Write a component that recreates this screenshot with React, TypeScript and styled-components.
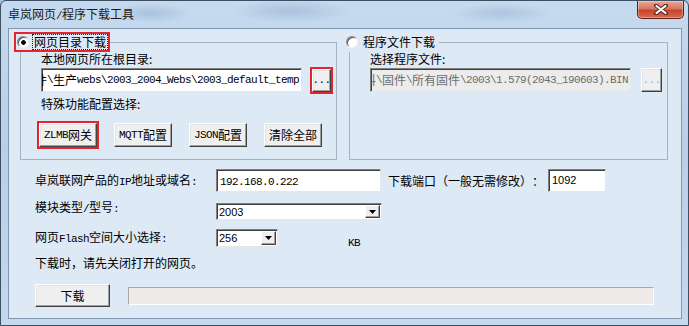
import React from "react";
import styled, { createGlobalStyle } from "styled-components";

const GlobalStyle = createGlobalStyle`
  html, body {
    margin: 0;
    padding: 0;
    background: #a9c1da;
  }
  body {
    font-family: "Noto Sans CJK SC", "DejaVu Sans", sans-serif;
    font-size: 12px;
    color: #000;
    text-spacing-trim: space-all;
  }
`;

const Window = styled.div`
  width: 689px;
  height: 326px;
  box-sizing: border-box;
  display: flex;
  flex-direction: column;
  border: 1px solid #3d4f63;
  border-radius: 6px 6px 0 0;
  overflow: hidden;
  background:
    radial-gradient(ellipse 40px 10px at 150px 12px, rgba(120, 150, 185, 0.35), transparent),
    radial-gradient(ellipse 60px 12px at 290px 10px, rgba(110, 140, 180, 0.3), transparent),
    radial-gradient(ellipse 50px 10px at 500px 12px, rgba(120, 150, 185, 0.3), transparent),
    linear-gradient(180deg, #c6daef 0%, #b8cfe7 45%, #c4d8ee 100%);
`;

const TitleBar = styled.div`
  height: 27px;
  flex: none;
  display: flex;
  align-items: flex-start;
  justify-content: space-between;
  padding-left: 7px;
`;

const Title = styled.div`
  margin-top: 6px;
  line-height: 14px;
  color: #1a1a1a;
`;

const CloseButton = styled.div`
  width: 47px;
  height: 18px;
  margin-right: 4px;
  box-sizing: border-box;
  border: 1px solid #5b2019;
  border-top: none;
  border-radius: 0 0 5px 5px;
  background: linear-gradient(180deg, #e8a796 0%, #d8775f 45%, #c7432a 55%, #d9694d 100%);
  box-shadow: inset 0 0 0 1px rgba(255, 255, 255, 0.35);
  display: flex;
  align-items: center;
  justify-content: center;
`;

const Client = styled.div`
  flex: 1;
  margin: 0 6px 6px 7px;
  border: 1px solid #8298b0;
  background: #dee9f6;
  display: flex;
  flex-direction: column;
  padding: 3px 12px 0 11px;
`;

const GroupsRow = styled.div`
  display: flex;
  gap: 12px;
`;

const Group = styled.fieldset<{ $w: number }>`
  width: ${(p) => p.$w}px;
  box-sizing: border-box;
  margin: 0;
  padding: 0;
  min-width: 0;
  border: 1px solid #a2b3c6;
`;

const Legend = styled.legend<{ $highlight?: boolean; $shift: number }>`
  padding: 1px;
  margin-left: ${(p) => p.$shift}px;
  border: 2px solid ${(p) => (p.$highlight ? "#e3252d" : "transparent")};
  display: flex;
  align-items: center;
  gap: 4px;
  height: 20px;
  box-sizing: border-box;
`;

const Radio = styled.span<{ $checked?: boolean }>`
  width: 12px;
  height: 12px;
  box-sizing: border-box;
  border-radius: 50%;
  border: 1px solid;
  border-color: #8a8a8a #f4f4f4 #f4f4f4 #8a8a8a;
  box-shadow: inset 1px 1px 0 #505050;
  background: ${(p) =>
    p.$checked
      ? "radial-gradient(circle at 55% 55%, #000 0 2px, #fff 2.6px)"
      : "#fff"};
`;

const FocusText = styled.span<{ $focus?: boolean }>`
  line-height: 14px;
  padding: 0 1px;
  outline: ${(p) => (p.$focus ? "1px dotted #222" : "none")};
`;

const GroupBody = styled.div`
  display: flex;
  flex-direction: column;
  align-items: flex-start;
  padding: 0 12px 12px 20px;
`;

const Label = styled.div<{ $top?: number }>`
  line-height: 14px;
  margin-top: ${(p) => p.$top ?? 0}px;
  white-space: nowrap;
`;

const PortLabel = styled(Label)`
  width: 156px;
  flex: none;
  margin: 0 4px 0 7px;
`;

const PathRow = styled.div`
  display: flex;
  align-items: center;
  gap: 10px;
  margin-top: 2px;
`;

const PathField = styled.div<{ $disabled?: boolean }>`
  width: 261px;
  height: 24px;
  box-sizing: border-box;
  border: 1px solid;
  border-color: #7f7f7f #e6e6e6 #e6e6e6 #7f7f7f;
  box-shadow: inset 1px 1px 0 #3f3f3f;
  background: ${(p) => (p.$disabled ? "#ececec" : "#fff")};
  color: ${(p) => (p.$disabled ? "#6d6d6d" : "#000")};
  display: flex;
  align-items: center;
  justify-content: flex-end;
  overflow: hidden;
  white-space: nowrap;
  padding: 0 2px 0 3px;
  line-height: 14px;
`;

const Button = styled.button<{ $w: number; $h: number; $highlight?: boolean; $disabled?: boolean }>`
  width: ${(p) => p.$w}px;
  height: ${(p) => p.$h}px;
  flex: none;
  padding: 0;
  box-sizing: border-box;
  background: #efefef;
  border: 1px solid;
  border-color: #ffffff #404040 #404040 #ffffff;
  box-shadow: inset -1px -1px 0 #a0a0a0, inset 1px 1px 0 #e4e4e4;
  font: inherit;
  line-height: 14px;
  color: ${(p) => (p.$disabled ? "#a8a8a8" : "#000")};
  outline: ${(p) => (p.$highlight ? "2px solid #e3252d" : "none")};
  display: flex;
  align-items: center;
  justify-content: center;
  white-space: nowrap;
`;

const ButtonRow = styled.div`
  display: flex;
  gap: 17px;
  margin: 12px 0 0 -2px;
`;

const Form = styled.div`
  display: flex;
  flex-direction: column;
  padding-left: 15px;
  margin-top: 9px;
`;

const Row = styled.div<{ $top: number; $align?: string }>`
  display: flex;
  align-items: ${(p) => p.$align ?? "center"};
  margin-top: ${(p) => p.$top}px;
`;

const RowLabel = styled.div`
  width: 181px;
  flex: none;
  line-height: 14px;
  white-space: nowrap;
`;

const TextBox = styled.div<{ $w: number; $sans?: boolean }>`
  width: ${(p) => p.$w}px;
  height: 23px;
  box-sizing: border-box;
  border: 1px solid;
  border-color: #7f7f7f #e6e6e6 #e6e6e6 #7f7f7f;
  box-shadow: inset 1px 1px 0 #3f3f3f;
  background: #fff;
  padding: 3px 0 0 3px;
  line-height: 14px;
  font-family: ${(p) => (p.$sans ? '"Liberation Sans", Arial, sans-serif' : "inherit")};
  font-size: ${(p) => (p.$sans ? "11px" : "12px")};
`;

const Combo = styled.div<{ $w: number; $h: number; $mt?: number }>`
  width: ${(p) => p.$w}px;
  height: ${(p) => p.$h}px;
  margin-top: ${(p) => p.$mt ?? 0}px;
  box-sizing: border-box;
  border: 1px solid;
  border-color: #7f7f7f #e6e6e6 #e6e6e6 #7f7f7f;
  box-shadow: inset 1px 1px 0 #3f3f3f;
  background: #fff;
  display: flex;
  align-items: center;
  justify-content: space-between;
  padding: 1px 1px 1px 2px;
  font-family: "Liberation Sans", Arial, sans-serif;
  font-size: 11px;
`;

const ComboArrow = styled.div`
  width: 15px;
  height: 100%;
  box-sizing: border-box;
  background: #efefef;
  border: 1px solid;
  border-color: #ffffff #404040 #404040 #ffffff;
  box-shadow: inset -1px -1px 0 #a0a0a0;
  display: flex;
  align-items: center;
  justify-content: center;
`;

const Unit = styled.div`
  margin: 9px 0 0 70px;
  line-height: 12px;
  align-self: flex-start;
`;

const Progress = styled.div`
  width: 526px;
  height: 18px;
  margin-left: 18px;
  box-sizing: border-box;
  background: #eeebe8;
  border: 1px solid;
  border-color: #a8a8a8 #ffffff #ffffff #a8a8a8;
`;

const Latin = styled.span`
  font-family: "Liberation Mono", "DejaVu Sans Mono", monospace;
  font-size: 11px;
  letter-spacing: -0.6px;
`;

function Mixed({ text }: { text: string }) {
  const parts = text.split(/([\x20-\x7e]+)/);
  return (
    <>
      {parts.map((p, i) =>
        p === "" ? null : /^[\x20-\x7e]+$/.test(p) ? (
          <Latin key={i}>{p}</Latin>
        ) : (
          <React.Fragment key={i}>{p}</React.Fragment>
        )
      )}
    </>
  );
}

function DownArrow() {
  return (
    <svg width="7" height="4" viewBox="0 0 7 4">
      <path d="M0 0 H7 L3.5 4 Z" fill="#000" />
    </svg>
  );
}

function App() {
  return (
    <>
      <GlobalStyle />
      <Window>
        <TitleBar>
          <Title>
            <Mixed text="卓岚网页/程序下载工具" />
          </Title>
          <CloseButton>
            <svg width="14" height="11" viewBox="0 0 14 11">
              <path d="M2 1.5 L12 9.5 M12 1.5 L2 9.5" stroke="#5a2a22" strokeWidth="4" strokeLinecap="round" />
              <path d="M2.5 2 L11.5 9 M11.5 2 L2.5 9" stroke="#ffffff" strokeWidth="2.2" strokeLinecap="round" />
            </svg>
          </CloseButton>
        </TitleBar>
        <Client>
          <GroupsRow>
            <Group $w={317}>
              <Legend $highlight $shift={-7}>
                <Radio $checked />
                <FocusText $focus>网页目录下载</FocusText>
              </Legend>
              <GroupBody>
                <Label>本地网页所在根目录:</Label>
                <PathRow>
                  <PathField>
                    <Mixed text="件\生产webs\2003_2004_Webs\2003_default_temp" />
                  </PathField>
                  <Button $w={19} $h={23} $highlight>
                    <Latin>...</Latin>
                  </Button>
                </PathRow>
                <Label $top={5}>特殊功能配置选择:</Label>
                <ButtonRow>
                  <Button $w={58} $h={24} $highlight>
                    <Mixed text="ZLMB网关" />
                  </Button>
                  <Button $w={58} $h={24}>
                    <Mixed text="MQTT配置" />
                  </Button>
                  <Button $w={58} $h={24}>
                    <Mixed text="JSON配置" />
                  </Button>
                  <Button $w={58} $h={24}>
                    清除全部
                  </Button>
                </ButtonRow>
              </GroupBody>
            </Group>
            <Group $w={319}>
              <Legend $shift={-7}>
                <Radio />
                <FocusText>程序文件下载</FocusText>
              </Legend>
              <GroupBody>
                <Label>选择程序文件:</Label>
                <PathRow>
                  <PathField $disabled>
                    <Mixed text="资料\固件\所有固件\2003\1.579(2043_190603).BIN" />
                  </PathField>
                  <Button $w={21} $h={24} $disabled>
                    <Latin>...</Latin>
                  </Button>
                </PathRow>
              </GroupBody>
            </Group>
          </GroupsRow>
          <Form>
            <Row $top={0}>
              <RowLabel>
                <Mixed text="卓岚联网产品的IP地址或域名:" />
              </RowLabel>
              <TextBox $w={165}>
                <Latin>192.168.0.222</Latin>
              </TextBox>
              <PortLabel>下载端口（一般无需修改）：</PortLabel>
              <TextBox $w={58} $sans>
                1092
              </TextBox>
            </Row>
            <Row $top={8} $align="flex-start">
              <RowLabel>
                <Mixed text="模块类型/型号:" />
              </RowLabel>
              <Combo $w={166} $h={17} $mt={3}>
                <span>2003</span>
                <ComboArrow>
                  <DownArrow />
                </ComboArrow>
              </Combo>
            </Row>
            <Row $top={6}>
              <RowLabel>
                <Mixed text="网页Flash空间大小选择:" />
              </RowLabel>
              <Combo $w={62} $h={18}>
                <span>256</span>
                <ComboArrow>
                  <DownArrow />
                </ComboArrow>
              </Combo>
              <Unit>
                <Latin>KB</Latin>
              </Unit>
            </Row>
            <Row $top={7}>
              <Label>下载时，请先关闭打开的网页。</Label>
            </Row>
            <Row $top={14}>
              <Button $w={75} $h={23}>
                下载
              </Button>
              <Progress />
            </Row>
          </Form>
        </Client>
      </Window>
    </>
  );
}

export default App;
